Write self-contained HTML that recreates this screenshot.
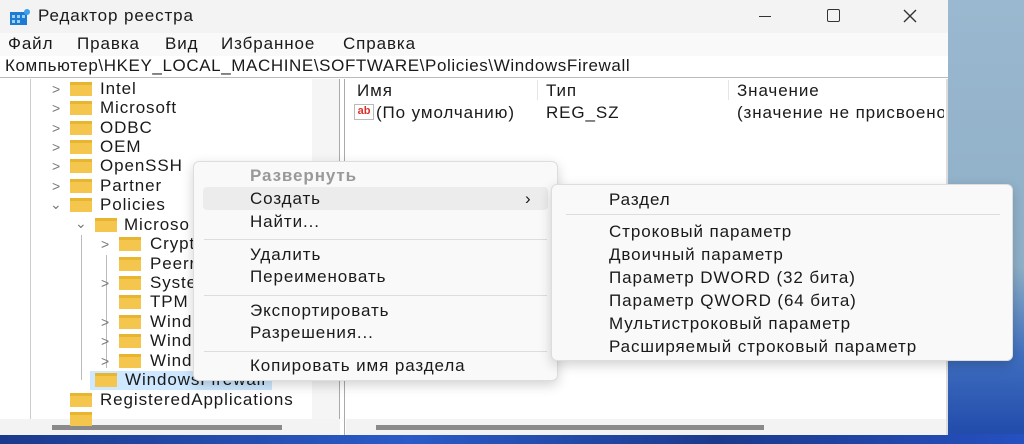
<!DOCTYPE html>
<html><head><meta charset="utf-8"><style>
*{margin:0;padding:0;box-sizing:border-box}
body{width:1024px;height:444px;overflow:hidden;position:relative;font-family:"Liberation Sans","DejaVu Sans",sans-serif;font-size:17px;letter-spacing:0.9px;color:#1a1a1a;background:#1a3a8a}
.abs{position:absolute}
#desk{left:946px;top:0;width:78px;height:444px;background:linear-gradient(180deg,#9ab8cf 0%,#8fb0c8 60%,#3f6fc0 80%,#1f47a8 100%)}
#deskb{left:0;top:434px;width:1024px;height:10px;background:linear-gradient(90deg,#1b3a8c,#2a5bc8 40%,#1b3a8c 70%,#2550c0)}
#win{left:0;top:0;width:948px;height:435px;background:#fff}
#title{left:0;top:0;width:948px;height:33px;background:#f3f3f3}
#menu{left:0;top:33px;width:948px;height:23px;background:#f9f9f9}
#addr{left:0;top:56px;width:948px;height:22px;background:#fff;border-bottom:1px solid #bbb}
.t{position:absolute;white-space:nowrap;line-height:20px}
.fold{position:absolute;width:22px;height:14px;background:#f4c64e;border-top:3px solid #e8b530}
.chev{position:absolute;color:#777;font-size:14px}
.cm{position:absolute;background:#f9f9f9;border:1px solid #ddd;box-shadow:0 4px 12px rgba(0,0,0,.18);border-radius:6px}
.sep{position:absolute;height:1px;background:#ddd}
</style></head><body>
<div class="abs" id="desk"></div>
<div class="abs" id="deskb"></div>
<div class="abs" id="win">
 <div class="abs" id="title">
  <svg class="abs" style="left:10px;top:9px" width="20" height="16"><rect x="0" y="3" width="17" height="13" fill="#1e7bd4"/><g fill="#9fd0f5"><rect x="2" y="6" width="3" height="3"/><rect x="7" y="6" width="3" height="3"/><rect x="12" y="6" width="3" height="3"/><rect x="2" y="11" width="3" height="3"/><rect x="7" y="11" width="3" height="3"/></g><circle cx="17" cy="3" r="3" fill="#3ba0ee"/></svg>
  <div class="t" style="left:38px;top:6px">Редактор реестра</div>
  <div class="abs" style="left:759px;top:16px;width:12px;height:1px;background:#333"></div>
  <div class="abs" style="left:827px;top:9px;width:13px;height:13px;border:1.5px solid #333;border-radius:2px"></div>
  <svg class="abs" style="left:903px;top:9px" width="14" height="14"><path d="M1 1L13 13M13 1L1 13" stroke="#333" stroke-width="1.4"/></svg>
 </div>
 <div class="abs" id="menu">
  <div class="t" style="left:8px;top:1px">Файл</div>
  <div class="t" style="left:77px;top:1px">Правка</div>
  <div class="t" style="left:165px;top:1px">Вид</div>
  <div class="t" style="left:221px;top:1px">Избранное</div>
  <div class="t" style="left:343px;top:1px">Справка</div>
 </div>
 <div class="abs" id="addr"><div class="t" style="left:5px;top:0px;letter-spacing:0.6px">Компьютер\HKEY_LOCAL_MACHINE\SOFTWARE\Policies\WindowsFirewall</div></div>
 <div class="abs" style="left:0;top:79px;width:340px;height:356px;background:#fff"></div>
 <div class="abs" style="left:312px;top:79px;width:28px;height:340px;background:#f5f5f5"></div>
 <div class="abs" style="left:30px;top:79px;width:1px;height:340px;background:#ccc"></div>
 <div class="abs" style="left:339px;top:79px;width:1px;height:356px;background:#aaa"></div>
 <div class="abs" style="left:344px;top:79px;width:1px;height:356px;background:#aaa"></div>
 <div class="abs" style="left:0;top:419px;width:340px;height:16px;background:#f3f3f3"></div>
 <div class="abs" style="left:52px;top:425px;width:230px;height:5px;background:#8a8a8a"></div>
 <div class="abs" style="left:106px;top:255px;width:1px;height:113px;background:#bbb"></div>
 <div class="abs" style="left:81px;top:235px;width:1px;height:145px;background:#bbb"></div>
 <div class="abs" style="left:90px;top:371px;width:182px;height:19px;background:#cde8ff"></div>
 <div class="chev" style="left:52px;top:81px">&gt;</div><div class="fold" style="left:70px;top:82px"></div><div class="t" style="left:100px;top:79px">Intel</div>
 <div class="chev" style="left:52px;top:100px">&gt;</div><div class="fold" style="left:70px;top:101px"></div><div class="t" style="left:100px;top:98px">Microsoft</div>
 <div class="chev" style="left:52px;top:120px">&gt;</div><div class="fold" style="left:70px;top:121px"></div><div class="t" style="left:100px;top:118px">ODBC</div>
 <div class="chev" style="left:52px;top:139px">&gt;</div><div class="fold" style="left:70px;top:140px"></div><div class="t" style="left:100px;top:137px">OEM</div>
 <div class="chev" style="left:52px;top:158px">&gt;</div><div class="fold" style="left:70px;top:159px"></div><div class="t" style="left:100px;top:156px">OpenSSH</div>
 <div class="chev" style="left:52px;top:178px">&gt;</div><div class="fold" style="left:70px;top:179px"></div><div class="t" style="left:100px;top:176px">Partner</div>
 <div class="chev" style="left:50px;top:196px">⌄</div><div class="fold" style="left:70px;top:198px"></div><div class="t" style="left:100px;top:195px">Policies</div>
 <div class="chev" style="left:75px;top:215px">⌄</div><div class="fold" style="left:95px;top:218px"></div><div class="t" style="left:124px;top:215px">Microso</div>
 <div class="chev" style="left:101px;top:236px">&gt;</div><div class="fold" style="left:119px;top:237px"></div><div class="t" style="left:150px;top:234px">Crypt</div>
 <div class="fold" style="left:119px;top:257px"></div><div class="t" style="left:150px;top:254px">Peerr</div>
 <div class="chev" style="left:101px;top:275px">&gt;</div><div class="fold" style="left:119px;top:276px"></div><div class="t" style="left:150px;top:273px">Syste</div>
 <div class="fold" style="left:119px;top:295px"></div><div class="t" style="left:150px;top:292px">TPM</div>
 <div class="chev" style="left:101px;top:314px">&gt;</div><div class="fold" style="left:119px;top:315px"></div><div class="t" style="left:150px;top:312px">Wind</div>
 <div class="chev" style="left:101px;top:333px">&gt;</div><div class="fold" style="left:119px;top:334px"></div><div class="t" style="left:150px;top:331px">Wind</div>
 <div class="chev" style="left:101px;top:353px">&gt;</div><div class="fold" style="left:119px;top:354px"></div><div class="t" style="left:150px;top:351px">Wind</div>
 <div class="fold" style="left:95px;top:373px"></div><div class="t" style="left:125px;top:370px">WindowsFirewall</div>
 <div class="fold" style="left:70px;top:393px"></div><div class="t" style="left:100px;top:390px">RegisteredApplications</div>
 <div class="fold" style="left:70px;top:412px"></div>
 <div class="abs" style="left:346px;top:419px;width:602px;height:16px;background:#f3f3f3"></div>
 <div class="abs" style="left:376px;top:425px;width:388px;height:5px;background:#8a8a8a"></div>
 <div class="abs" style="left:946px;top:79px;width:2px;height:356px;background:#ddd"></div>
 <div class="t" style="left:357px;top:81px">Имя</div>
 <div class="abs" style="left:537px;top:80px;width:1px;height:20px;background:#e5e5e5"></div>
 <div class="t" style="left:546px;top:81px">Тип</div>
 <div class="abs" style="left:728px;top:80px;width:1px;height:20px;background:#e5e5e5"></div>
 <div class="t" style="left:737px;top:81px">Значение</div>
 <div class="abs" style="left:354px;top:104px;width:20px;height:16px;border:1px solid #bbb;background:#fff;color:#d8322a;font-size:11px;letter-spacing:0;font-weight:bold;line-height:12px;text-align:center">ab</div>
 <div class="t" style="left:376px;top:103px">(По умолчанию)</div>
 <div class="t" style="left:546px;top:103px">REG_SZ</div>
 <div class="t" style="left:737px;top:103px;width:207px;overflow:hidden">(значение не присвоено)</div>
</div>
<div class="cm" style="left:193px;top:161px;width:365px;height:220px">
 <div class="abs" style="left:9px;top:25px;width:345px;height:23px;background:#ececec;border-radius:4px"></div>
 <div class="t" style="left:56px;top:4px;color:#999;font-weight:bold">Развернуть</div>
 <div class="t" style="left:56px;top:27px">Создать</div>
 <div class="t" style="left:331px;top:27px">›</div>
 <div class="t" style="left:56px;top:50px">Найти...</div>
 <div class="sep" style="left:10px;top:77px;width:343px"></div>
 <div class="t" style="left:56px;top:83px">Удалить</div>
 <div class="t" style="left:56px;top:105px">Переименовать</div>
 <div class="sep" style="left:10px;top:133px;width:343px"></div>
 <div class="t" style="left:56px;top:139px">Экспортировать</div>
 <div class="t" style="left:56px;top:161px">Разрешения...</div>
 <div class="sep" style="left:10px;top:189px;width:343px"></div>
 <div class="t" style="left:56px;top:194px">Копировать имя раздела</div>
</div>
<div class="cm" style="left:551px;top:184px;width:462px;height:177px">
 <div class="t" style="left:57px;top:5px">Раздел</div>
 <div class="sep" style="left:14px;top:29px;width:434px"></div>
 <div class="t" style="left:57px;top:37px">Строковый параметр</div>
 <div class="t" style="left:57px;top:60px">Двоичный параметр</div>
 <div class="t" style="left:57px;top:83px">Параметр DWORD (32 бита)</div>
 <div class="t" style="left:57px;top:106px">Параметр QWORD (64 бита)</div>
 <div class="t" style="left:57px;top:129px">Мультистроковый параметр</div>
 <div class="t" style="left:57px;top:152px">Расширяемый строковый параметр</div>
</div>
</body></html>
